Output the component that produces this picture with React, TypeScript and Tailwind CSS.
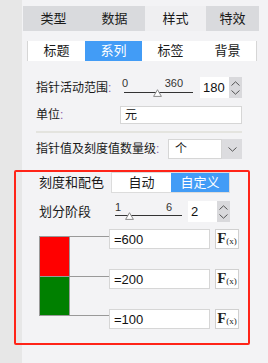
import React from 'react'

const tabs = [
  { label: '类型', w: 'w-[61px]', active: false },
  { label: '数据', w: 'w-[61px]', active: false },
  { label: '样式', w: 'w-[61px]', active: true },
  { label: '特效', w: 'w-[53px]', active: false },
]

const subTabs = ['标题', '系列', '标签', '背景']

const Chevron = ({ up }: { up?: boolean }) => (
  <svg width="9" height="5" viewBox="0 0 9 5" className="block">
    <path
      d={up ? 'M0.5 4.5 L4.5 0.8 L8.5 4.5' : 'M0.5 0.5 L4.5 4.2 L8.5 0.5'}
      fill="none"
      stroke="#555"
      strokeWidth="1"
    />
  </svg>
)

const Thumb = () => (
  <svg width="9" height="8" viewBox="0 0 9 8" className="block">
    <path d="M4.5 0.7 L8.4 7.4 L0.6 7.4 Z" fill="#fff" stroke="#8a8a8a" strokeWidth="1" />
  </svg>
)

const Colon = () => <span className="text-[#8b5aa8]">:</span>

// spin box with up/down buttons
const Spin = ({ value }: { value: string }) => (
  <div className="flex h-[21px] w-[42px]">
    <div className="flex flex-1 items-center bg-white pl-[3px] text-[13px] leading-none text-[#111]">{value}</div>
    <div className="flex w-[13px] flex-col items-center justify-center gap-[4px] bg-[#d9d9dc]">
      <Chevron up />
      <Chevron />
    </div>
  </div>
)

const Slider = ({
  min,
  max,
  w,
  lineTop,
  thumbLeft,
  lineLeft,
}: {
  min: string
  max: string
  w: string
  lineTop: string
  thumbLeft: string
  lineLeft: string
}) => (
  <div className={`relative h-full ${w}`}>
    <div className="flex justify-between pr-[10px] pt-[1px] text-[11px] leading-none text-[#333]">
      <span>{min}</span>
      <span>{max}</span>
    </div>
    <div className={`absolute right-0 h-px bg-[#333] ${lineTop} ${lineLeft}`} />
    <div className={`absolute ${thumbLeft} ${lineTop} -mt-[3px]`}>
      <Thumb />
    </div>
  </div>
)

const Fx = () => (
  <div className="ml-[5px] flex h-[20px] w-[24px] items-end justify-center border border-[#d0d0d0] bg-white pb-[2px] font-['Liberation_Serif',serif] leading-none text-[#222]">
    <span className="text-[15px] font-bold">F</span>
    <span className="text-[9px]">(x)</span>
  </div>
)

const ValueRow = ({ value, lineMt }: { value: string; lineMt: string }) => (
  <div className="flex h-[20px] items-start">
    <div className={`h-px w-[39px] bg-[#999] ${lineMt}`} />
    <div className="flex h-[20px] w-[101px] items-center border border-[#d6d6d6] bg-white pl-[4px] text-[13px] leading-none text-[#111]">
      {value}
    </div>
    <Fx />
  </div>
)

export default function App() {
  return (
    <div className="flex h-[363px] w-[268px] overflow-hidden bg-[#f3f3f5] font-['Liberation_Sans','Noto_Sans_CJK_SC',sans-serif] text-[12px] text-[#1a1a1a]">
      {/* left strip */}
      <div className="w-[22px] shrink-0 bg-[#e7e7e7]" />

      <div className="flex min-w-0 flex-1 flex-col">
        {/* main tabs */}
        <div className="ml-px mt-[6px] flex h-[25px]">
          {tabs.map((t) => (
            <div
              key={t.label}
              className={`flex items-center justify-center text-[13px] ${t.w} ${t.active ? 'bg-[#efeff1]' : 'bg-[#d9dadd]'}`}
            >
              {t.label}
            </div>
          ))}
        </div>

        {/* sub tabs */}
        <div className="ml-[5px] mt-[10px] flex h-[20px] w-[230px] border-l border-r border-[#d6d6d6] bg-white">
          {subTabs.map((t) => (
            <div
              key={t}
              className={`flex w-[57px] items-center justify-center text-[13px] ${t === '系列' ? 'bg-[#429cf6] text-white' : ''}`}
            >
              {t}
            </div>
          ))}
        </div>

        <div className="flex flex-col pl-[14px]">
          {/* pointer range */}
          <div className="mt-[16px] flex h-[21px] items-center">
            <div className="w-[86px]">
              指针活动范围<Colon />
            </div>
            <Slider min="0" max="360" w="w-[71px]" lineTop="top-[15px]" lineLeft="left-[2px]" thumbLeft="left-[31px]" />
            <div className="ml-[7px]">
              <Spin value="180" />
            </div>
          </div>

          {/* unit */}
          <div className="mt-[8px] flex h-[18px] items-center">
            <div className="w-[84px]">
              单位<Colon />
            </div>
            <div className="flex h-[18px] w-[122px] items-center border border-[#d6d6d6] bg-white pl-[4px] text-[12px]">元</div>
          </div>

          <div className="mt-[7px] h-[2px] w-[206px] bg-[#e4e4df]" />

          {/* magnitude */}
          <div className="mt-[6px] flex h-[20px] items-center">
            <div className="w-[132px]">
              指针值及刻度值数量级<Colon />
            </div>
            <div className="flex h-[20px] w-[74px]">
              <div className="flex flex-1 items-center border border-[#d6d6d6] bg-white pl-[6px]">个</div>
              <div className="flex w-[20px] items-center justify-center bg-[#dcdcdf]">
                <Chevron />
              </div>
            </div>
          </div>

          {/* highlighted block */}
          <div className="-ml-[22px] mt-[11px] flex w-[236px] flex-col rounded-[2px] border-2 border-[#ff2418] pb-[14px] pl-[23px]">
            <div className="flex h-[21px] items-center">
              <div className="w-[72px] text-[13px]">刻度和配色</div>
              <div className="flex h-[21px] w-[119px] border border-[#dcdcdc] bg-white text-[13px]">
                <div className="flex w-[59px] items-center justify-center">自动</div>
                <div className="flex flex-1 items-center justify-center bg-[#429cf6] text-white">自定义</div>
              </div>
            </div>

            <div className="mt-[8px] flex h-[21px] items-center">
              <div className="w-[76px] text-[13px]">划分阶段</div>
              <Slider min="1" max="6" w="w-[67px]" lineTop="top-[14px]" lineLeft="left-0" thumbLeft="left-[10px]" />
              <div className="ml-[6px]">
                <Spin value="2" />
              </div>
            </div>

            <div className="mt-[7px] flex items-start">
              <div className="mt-[7px] flex h-[80px] w-[31px] flex-col border border-[#999]">
                <div className="flex-1 bg-[#ff0000]" />
                <div className="h-px bg-[#999]" />
                <div className="flex-1 bg-[#008000]" />
              </div>
              <div className="flex flex-col gap-[20px]">
                <ValueRow value="=600" lineMt="mt-[7px]" />
                <ValueRow value="=200" lineMt="mt-[7px]" />
                <ValueRow value="=100" lineMt="mt-[6px]" />
              </div>
            </div>
          </div>
        </div>
      </div>
    </div>
  )
}
